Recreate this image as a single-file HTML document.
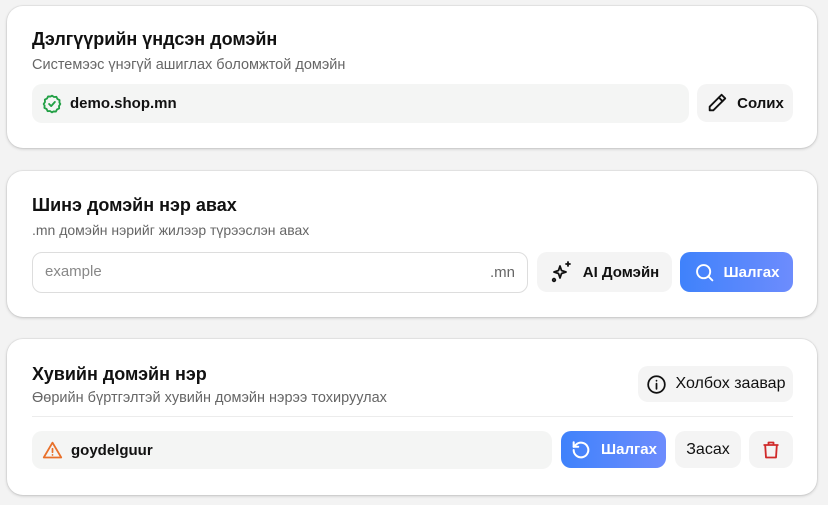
<!DOCTYPE html><html><head><meta charset="utf-8"><style>
*{box-sizing:border-box;margin:0;padding:0}
body{width:828px;height:505px;background:#f3f3f3;font-family:"Liberation Sans",sans-serif;position:relative;overflow:hidden;color:#111}
.card{position:absolute;left:7px;width:810px;background:#fff;border-radius:16px;box-shadow:0 1px 3px rgba(0,0,0,.18),0 0 0 1px rgba(0,0,0,.04)}
.t{position:absolute;left:25px;font-size:18px;font-weight:bold;color:#111}
.s{position:absolute;left:25px;font-size:14.5px;color:#666}
.a{position:absolute;display:flex;align-items:center;justify-content:center;gap:9px;border-radius:10px;font-size:15px;font-weight:bold}
.g{background:#f4f4f4;color:#111}
.b{background:linear-gradient(90deg,#3f82fb,#6d8cfd);color:#fff}
.f{position:absolute;background:#f4f5f4;border-radius:10px;display:flex;align-items:center;padding-left:10px;gap:8px;font-size:15px;font-weight:bold}
</style></head><body>
<div class="card" style="top:6px;height:142px">
<div class="t" style="top:23px">Дэлгүүрийн үндсэн домэйн</div>
<div class="s" style="top:51px">Системээс үнэгүй ашиглах боломжтой домэйн</div>
<div class="f" style="left:25px;top:78px;width:657px;height:39px"><svg width="20" height="20" viewBox="0 0 24 24" fill="none" stroke="#22a045" stroke-width="2.2" stroke-linecap="round" stroke-linejoin="round"><path d="M12 2l2.4 1.6 2.9-.2 1.2 2.6 2.6 1.3-.2 2.9L22 12l-1.6 2.4.2 2.9-2.6 1.2-1.3 2.6-2.9-.2L12 22l-2.4-1.6-2.9.2-1.2-2.6-2.6-1.3.2-2.9L2 12l1.6-2.4-.2-2.9 2.6-1.2 1.3-2.6 2.9.2z"/><path d="M8.5 12l2.5 2.5 4.5-5"/></svg>demo.shop.mn</div>
<div class="a g" style="left:690px;top:78px;width:96px;height:38px"><svg width="22" height="22" viewBox="0 0 24 24" fill="none" stroke="#111" stroke-width="2" stroke-linecap="round" stroke-linejoin="round"><path d="M17 3l4 4L8 20H4v-4z"/><path d="M14 6l4 4"/></svg>Солих</div>
</div>
<div class="card" style="top:171px;height:146px">
<div class="t" style="top:24px">Шинэ домэйн нэр авах</div>
<div class="s" style="top:51px;font-size:14px">.mn домэйн нэрийг жилээр түрээслэн авах</div>
<div style="position:absolute;left:25px;top:81px;width:496px;height:41px;border:1px solid #ddd;border-radius:10px;font-size:15px;color:#888"><span style="position:absolute;left:12px;top:10px">example</span><span style="position:absolute;right:12px;top:11px;color:#666">.mn</span></div>
<div class="a g" style="left:530px;top:81px;width:135px;height:40px"><svg width="24" height="24" viewBox="0 0 24 24" fill="none" stroke="#111" stroke-width="1.8" stroke-linecap="round" stroke-linejoin="round"><path d="M10 6l1.5 4.5L16 12l-4.5 1.5L10 18l-1.5-4.5L4 12l4.5-1.5z"/><path d="M18 2v4M16 4h4"/><circle cx="4" cy="20" r="1.3"/></svg>AI Домэйн</div>
<div class="a b" style="left:673px;top:81px;width:113px;height:40px"><svg width="21" height="21" viewBox="0 0 24 24" fill="none" stroke="#fff" stroke-width="2.2" stroke-linecap="round"><circle cx="11" cy="11" r="7.5"/><path d="M16.5 16.5l4.5 4.5"/></svg>Шалгах</div>
</div>
<div class="card" style="top:339px;height:156px">
<div class="t" style="top:25px">Хувийн домэйн нэр</div>
<div class="s" style="top:51px">Өөрийн бүртгэлтэй хувийн домэйн нэрээ тохируулах</div>
<div class="a g" style="left:631px;top:27px;width:155px;height:36px;font-weight:normal;font-size:16px"><svg width="21" height="21" viewBox="0 0 24 24" fill="none" stroke="#111" stroke-width="2" stroke-linecap="round"><circle cx="12" cy="12" r="9.5"/><path d="M12 11v6M12 7.5v.2"/></svg>Холбох заавар</div>
<div style="position:absolute;left:25px;top:77px;width:761px;height:1px;background:#ececec"></div>
<div class="f" style="left:25px;top:92px;width:520px;height:38px"><svg width="21" height="21" viewBox="0 0 24 24" fill="none" stroke="#e8702a" stroke-width="2" stroke-linecap="round" stroke-linejoin="round"><path d="M12 3L2 20h20z"/><path d="M12 10v4M12 17v.2"/></svg>goydelguur</div>
<div class="a b" style="left:554px;top:92px;width:105px;height:37px"><svg width="22" height="22" viewBox="0 0 24 24" fill="none" stroke="#fff" stroke-width="2.2" stroke-linecap="round" stroke-linejoin="round"><path d="M4 12a8 8 0 1 0 2.5-5.8L4 8.5"/><path d="M4 3.5v5h5"/></svg>Шалгах</div>
<div class="a g" style="left:668px;top:92px;width:66px;height:37px;font-weight:normal;font-size:16px">Засах</div>
<div class="a g" style="left:742px;top:92px;width:44px;height:37px"><svg width="20" height="22" viewBox="0 0 24 24" fill="none" stroke="#d02a2a" stroke-width="2.2" stroke-linejoin="round"><path d="M3 6h18M9 6V3h6v3M5 6l1 15h12l1-15"/></svg></div>
</div>
</body></html>
